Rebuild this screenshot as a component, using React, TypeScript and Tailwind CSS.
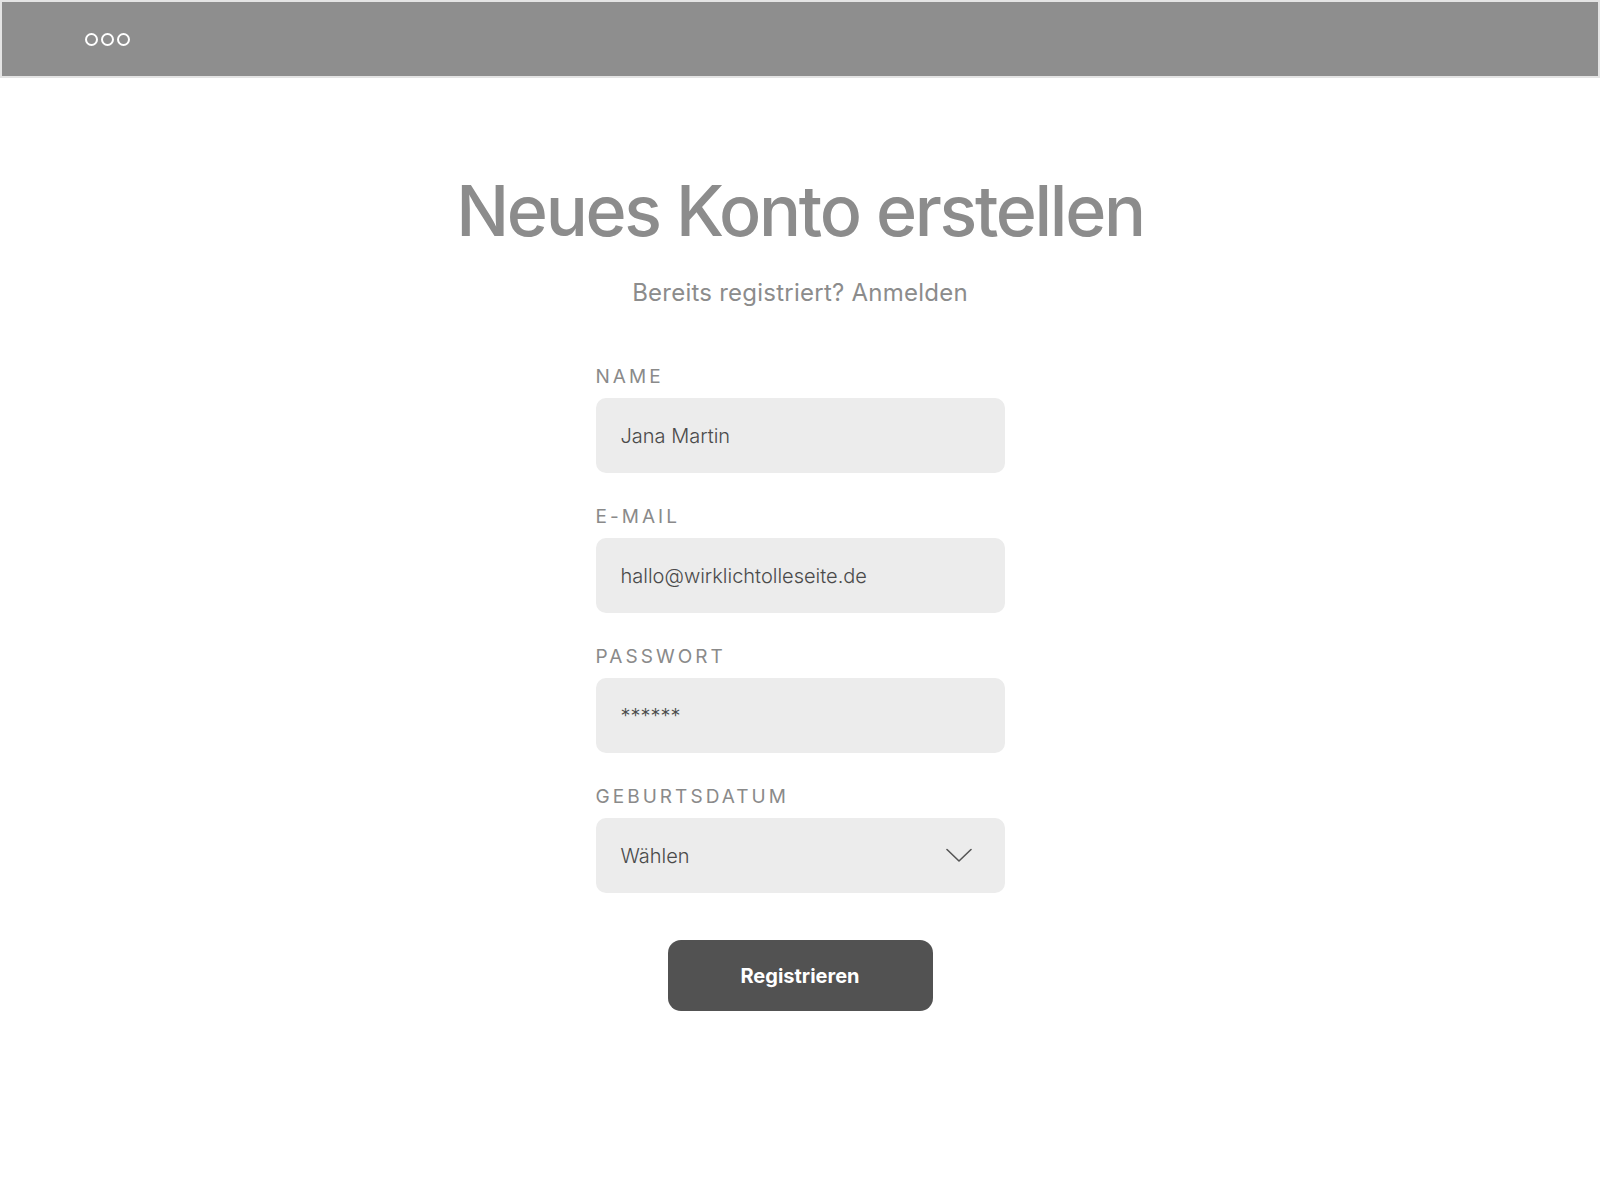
import React from "react";

type FieldProps = {
  label: string;
  children: React.ReactNode;
};

function Field({ label, children }: FieldProps) {
  return (
    <div className="flex flex-col">
      <label className="h-[24px] leading-[24px] text-[19px] tracking-[0.16em] text-[#8a8a8a] mb-[9px] [font-family:Inter,sans-serif]">
        {label}
      </label>
      {children}
    </div>
  );
}

function TextBox({ value }: { value: string }) {
  return (
    <div className="h-[75px] rounded-[10px] bg-[#ececec] pl-[25px] flex items-center text-[20px] text-[#4a4a4a] font-light [font-family:Inter,sans-serif]">
      {value}
    </div>
  );
}

function BrowserDots() {
  return (
    <div className="flex items-center gap-[3px]">
      {[0, 1, 2].map((i) => (
        <span
          key={i}
          className="block w-[13px] h-[13px] rounded-full border-2 border-white"
        />
      ))}
    </div>
  );
}

export default function App() {
  return (
    <div className="w-[1600px] h-[1200px] bg-white flex flex-col">
      <div className="p-[2px] bg-[#e4e4e4]">
        <div className="h-[74px] bg-[#8e8e8e] flex items-center pl-[83px]">
          <BrowserDots />
        </div>
      </div>

      <main className="flex flex-col items-center">
        <h1 className="mt-[93px] text-[70px] leading-[80px] font-medium text-[#8c8c8c] tracking-[-0.033em] [font-family:Inter,sans-serif]">
          Neues Konto erstellen
        </h1>
        <p className="mt-[26px] text-[24px] leading-[32px] tracking-[0.01em] text-[#8c8c8c] [font-family:Inter,sans-serif]">
          Bereits registriert? Anmelden
        </p>

        <form className="mt-[56px] w-[409px] flex flex-col gap-[32px]">
          <Field label="NAME">
            <TextBox value="Jana Martin" />
          </Field>
          <Field label="E-MAIL">
            <TextBox value="hallo@wirklichtolleseite.de" />
          </Field>
          <Field label="PASSWORT">
            <TextBox value="******" />
          </Field>
          <Field label="GEBURTSDATUM">
            <div className="h-[75px] rounded-[10px] bg-[#ececec] pl-[25px] pr-[33px] flex items-center justify-between text-[20px] text-[#4a4a4a] font-light [font-family:Inter,sans-serif]">
              <span>Wählen</span>
              <svg width="26" height="15" viewBox="0 0 26 15" fill="none">
                <path
                  d="M1 1.5 L13 13 L25 1.5"
                  stroke="#555555"
                  strokeWidth="1.6"
                  strokeLinecap="round"
                  strokeLinejoin="round"
                />
              </svg>
            </div>
          </Field>
        </form>

        <button
          type="button"
          className="mt-[47px] w-[265px] h-[71px] rounded-[13px] bg-[#525252] text-white text-[20px] font-bold [font-family:Inter,sans-serif]"
        >
          Registrieren
        </button>
      </main>
    </div>
  );
}
